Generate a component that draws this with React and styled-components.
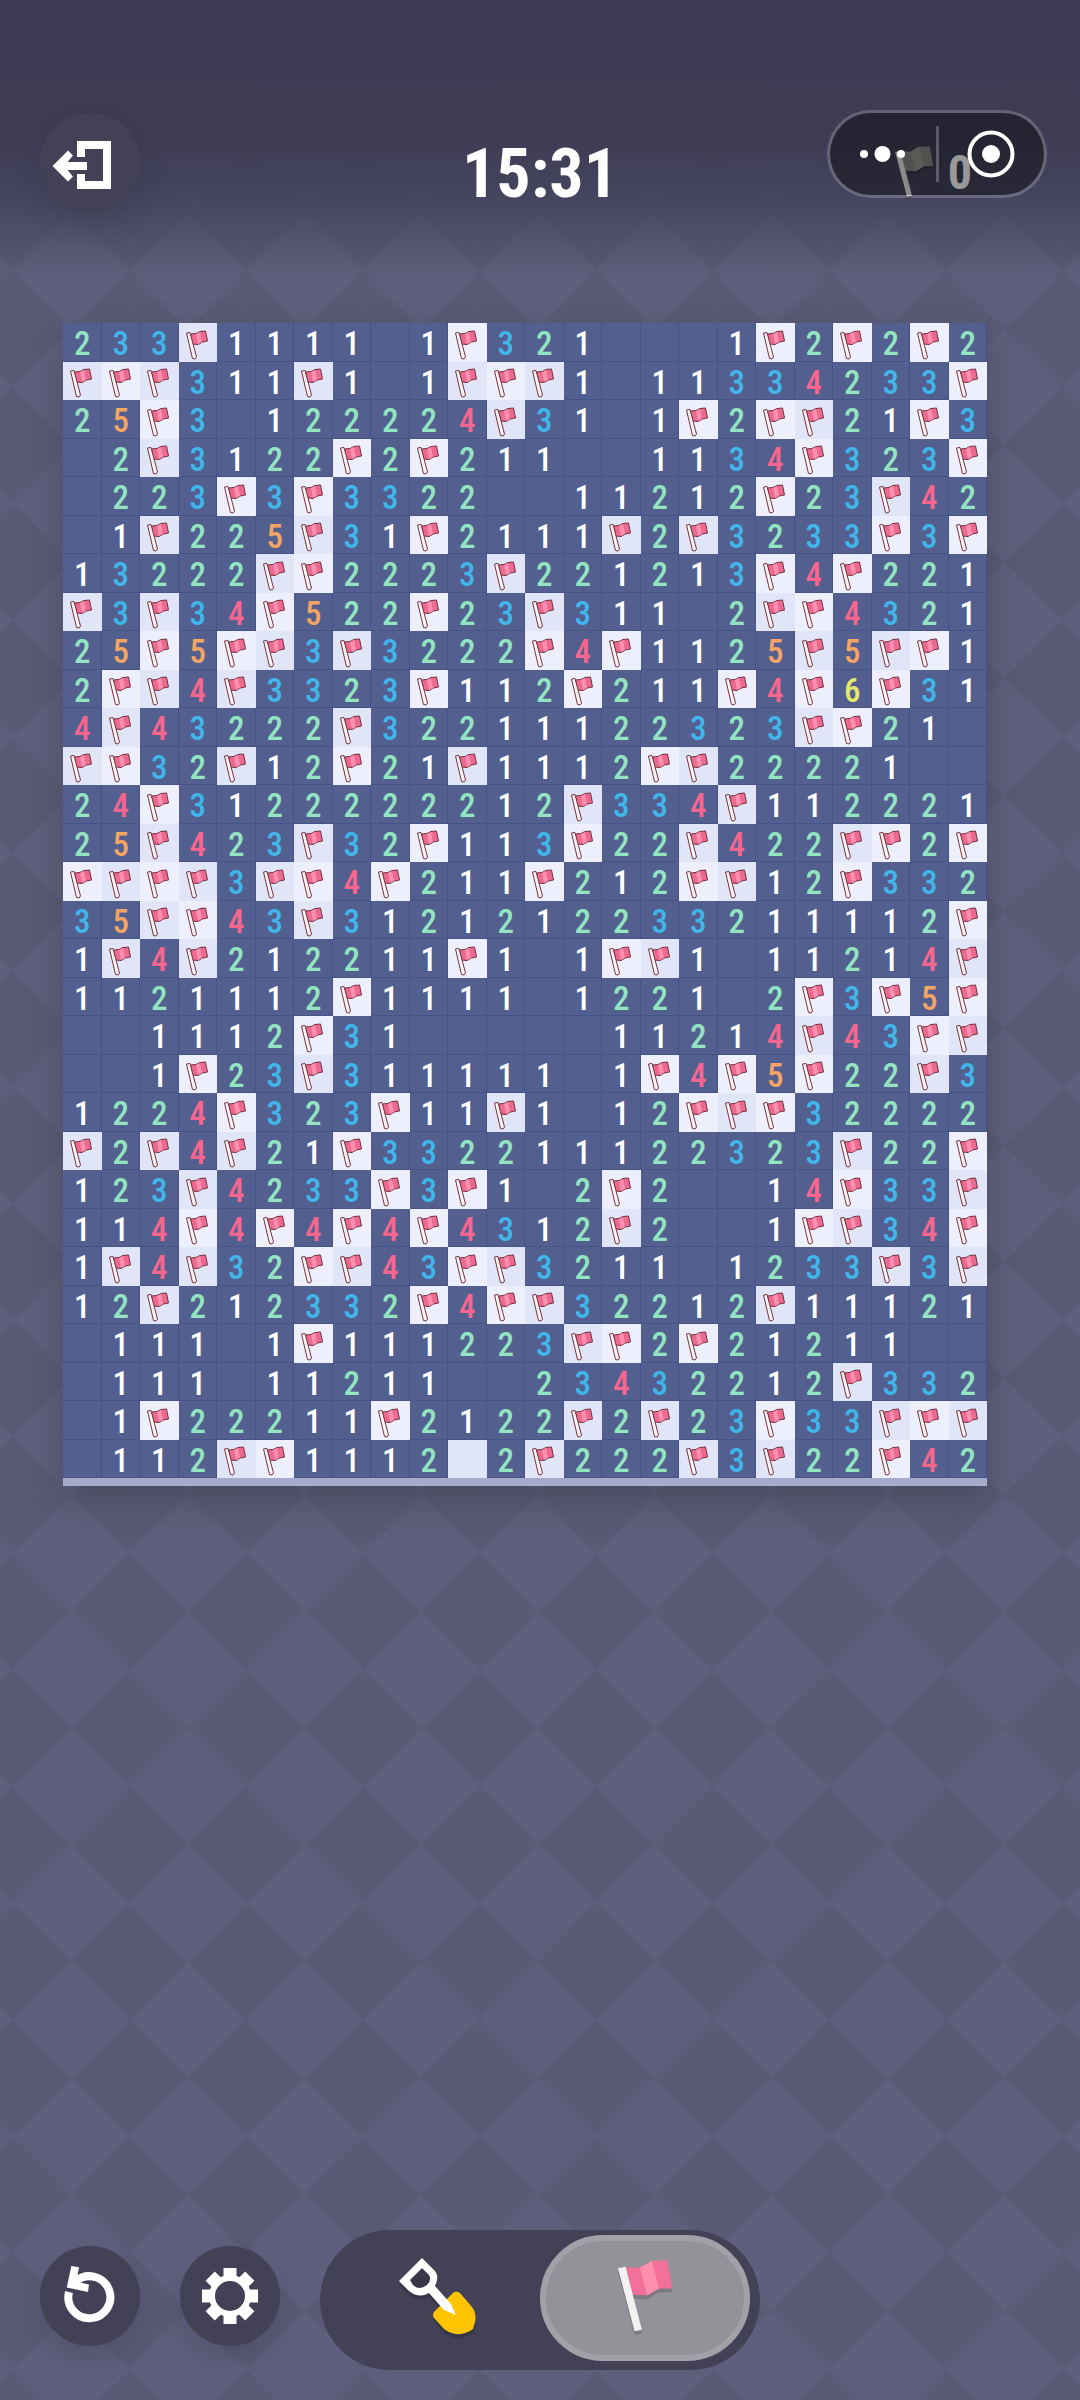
import React from "react";
import styled, { createGlobalStyle } from "styled-components";

const GlobalStyle = createGlobalStyle`
    * {
        box-sizing: border-box;
    }

    body {
        margin: 0;
        background: #5a5974;
        font-family: "Roboto Condensed", Roboto, sans-serif;
    }

    button {
        border: none;
        padding: 0;
        font-family: inherit;
        cursor: pointer;
    }

    svg {
        display: block;
    }
`;

const Page = styled.div`
    position: relative;
    min-height: 100vh;
    display: flex;
    flex-direction: column;
    background-color: #5f5f7d;
    background-image: linear-gradient(#3c3a53 0px, #3e3d54 140px, rgba(64, 63, 88, 0.85) 190px, rgba(90, 89, 116, 0) 280px),
        linear-gradient(45deg, #5a5a76 25%, transparent 25%, transparent 75%, #5a5a76 75%),
        linear-gradient(-45deg, #5a5a76 25%, transparent 25%, transparent 75%, #5a5a76 75%);
    background-size: 100% 100%, 10.8vw 10.8vw, 10.8vw 10.8vw;
    background-position: 0 0, 13px 212px, 13px 212px;
`;

const Header = styled.header`
    display: grid;
    grid-template-columns: 1fr auto 1fr;
    align-items: center;
    padding: 113px 40px 0;
`;

const RoundButton = styled.button`
    width: 100px;
    height: 100px;
    border-radius: 50%;
    background: #424156;
    box-shadow: 0 12px 24px rgba(40, 38, 60, 0.2);
`;

const Timer = styled.div`
    padding-top: 22px;
    color: #ffffff;
    font-size: 68px;
    font-weight: 700;
    line-height: 78px;
`;

const Counter = styled.div`
    justify-self: end;
    display: flex;
    align-items: center;
    gap: 14px;
    padding: 20px 68px 0 0;
    color: #ffffff;
    font-size: 48px;
    font-weight: 700;
    line-height: 56px;
`;

const Capsule = styled.div`
    position: absolute;
    top: 110px;
    right: 33px;
    width: 220px;
    height: 88px;
    display: flex;
    align-items: center;
    border: 3px solid rgba(255, 255, 255, 0.2);
    border-radius: 44px;
    background: rgba(0, 0, 0, 0.4);
    background-clip: padding-box;
`;

const CapsuleButton = styled.button`
    flex: 1;
    height: 56px;
    display: flex;
    align-items: center;
    justify-content: center;
    background: none;

    & + & {
        border-left: 3px solid rgba(255, 255, 255, 0.25);
    }
`;

const Main = styled.main`
    padding: 110px 93px 0 63px;
`;

const Board = styled.div`
    display: grid;
    grid-template-columns: repeat(24, 1fr);
    grid-template-rows: repeat(30, 1fr);
    aspect-ratio: 24 / 30;
    background: #525f8f;
`;

const BoardFrame = styled.div`
    border-bottom: 8px solid #a6abcb;
    box-shadow: 0 16px 32px rgba(50, 46, 58, 0.35);
`;

const numberColors = {
    1: "#ffffff",
    2: "#93e4c0",
    3: "#41b6ea",
    4: "#f7668f",
    5: "#f3a563",
    6: "#e6e96c",
};

const Cell = styled.button`
    min-width: 0;
    min-height: 0;
    display: flex;
    align-items: center;
    justify-content: center;
    padding-top: 4px;
    background: #525f8f;
    box-shadow: inset -1px -1px 0 #46528a;
    color: ${(props) => numberColors[props.$value]};
    font-size: 33px;
    font-weight: 500;
    line-height: 34px;
`;

const CoveredCell = styled.button`
    min-width: 0;
    min-height: 0;
    padding: 5px 0 0 6px;
    background: ${(props) => (props.$light ? "#edeffc" : "#e1e5f8")};
`;

const Footer = styled.footer`
    display: flex;
    align-items: flex-start;
    gap: 40px;
    margin-top: auto;
    padding: 0 40px 30px;
`;

const Actions = styled.div`
    display: flex;
    gap: 40px;
    padding-top: 16px;
`;

const ToolSwitch = styled.div`
    display: flex;
    width: 440px;
    height: 140px;
    padding: 5px 10px 9px;
    border-radius: 70px;
    background: #424156;
`;

const ToolButton = styled.button`
    flex: 1;
    display: flex;
    align-items: center;
    justify-content: center;
    border: 6px solid ${(props) => (props.$active ? "#a2a1a8" : "transparent")};
    border-radius: 63px;
    background: ${(props) => (props.$active ? "#939298" : "transparent")};
`;

// F = flag, # = covered, . = empty
const rows = [
    "233F1111.1F321...1F2F2F2",
    "FFF311F1.1FFF1.11334233F",
    "25F3.122224F31.1F2FF21F3",
    ".2F3122F2F211..1134F323F",
    ".223F3F3322..11212F23F42",
    ".1F225F31F2111F2F3233F3F",
    "13222FF2223F221213F4F221",
    "F3F34F522F23F311.2FF4321",
    "25F5FF3F3222F4F1125F5FF1",
    "2FF4F3323F112F211F4F6F31",
    "4F43222F32211122323FF21.",
    "FF32F12F21F1112FF22221..",
    "24F3122222212F334F112221",
    "25F423F32F113F22F422FF2F",
    "FFFF3FF4F211F212FF12F332",
    "35FF43F3121212233211112F",
    "1F4F212211F1.1FF1.11214F",
    "1121112F1111.1221.2F3F5F",
    "..1112F31.....11214F43FF",
    "..1F23F311111.1F4F5F22F3",
    "1224F323F11F1.12FFF32222",
    "F2F4F21F332211122323F22F",
    "123F4233F3F1.2F2..14F33F",
    "114F4F4F4F4312F2..1FF34F",
    "1F4F32FF43FF3211.1233F3F",
    "12F212332F4FF32212F11121",
    ".111.1F111223FF2F21211..",
    ".111.11211..23432212F332",
    ".1F22211F2122F2F23F33FFF",
    ".112FF1112#2F222F3F22F42",
];

const ExitIcon = () => (
    <svg width="100" height="100" viewBox="0 0 100 100" fill="#fff">
        <path d="M37 28H71V76H37V61H45V68H63V36H45V44H37Z" />
        <path d="M12.5 53L28 37.5L33 42.5L27.5 49H47V57H27.5L33 63.5L28 68.5Z" />
    </svg>
);

const RestartIcon = () => (
    <svg width="100" height="100" viewBox="0 0 100 100">
        <path d="M29 46A21 21 0 1 0 36 35" fill="none" stroke="#fff" strokeWidth="8" />
        <path d="M31.3 20L39 21.3L37 32L41 36.7L49 38.5L48 46L26.8 41.5Z" fill="#fff" />
    </svg>
);

const GearIcon = () => (
    <svg width="100" height="100" viewBox="0 0 100 100">
        <circle cx="50" cy="50" r="18" fill="none" stroke="#fff" strokeWidth="6" />
        {[0, 45, 90, 135, 180, 225, 270, 315].map((angle) => (
            <path key={angle} d="M43.5 22H56.5V34H43.5Z" fill="#fff" transform={`rotate(${angle} 50 50)`} />
        ))}
    </svg>
);

const ShovelIcon = () => (
    <svg width="84" height="84" viewBox="-6 -2 84 84">
        <g fill="#000" opacity="0.15" transform="translate(0 4)">
            <path d="M35 54L54 35Q57 32 61 35L73 49Q77 54 76.500 62L74 71Q66 77 57 76Q50 75 45 71L35 60Q33 57 35 54Z" />
            <path d="M23 0L0 23L10 33Q20 41 30 35L45 52L57 57L52 46L36 28Q41 18 35 12Z" />
        </g>
        <path d="M35 54L54 35Q57 32 61 35L73 49Q77 54 76.500 62L74 71Q66 77 57 76Q50 75 45 71L35 60Q33 57 35 54Z" fill="#ffc400" />
        <path
            d="M23 0L0 23L10 33Q20 41 30 35L45 52L57 57L52 46L36 28Q41 18 35 12ZM23 10L30 17Q33 22 28 27Q20 33 14 27L11 22Z"
            fill="#fff"
            fillRule="evenodd"
        />
    </svg>
);

const FlagIcon = ({ width, height, pole, cloth, fold }) => (
    <svg width={width} height={height} viewBox="414 180 166 240">
        <g fill="#000" opacity="0.15" transform="translate(0 12)">
            <path d="M414 210L437 206L486 396L464 400Z" />
            <path d="M438 207L480 209L516 188L562 186L578 271L538 271L502 292L458 290Z" />
        </g>
        <path d="M438 207L480 209L516 188L562 186L578 271L538 271L502 292L458 290Z" fill={cloth} />
        <path d="M480 209L516 188L538 271L502 292Z" fill={fold} />
        <path d="M414 210L437 206L486 396L464 400Z" fill={pole} />
    </svg>
);

const TileFlag = () => (
    <svg width="24" height="30" viewBox="0 0 24 30" strokeLinejoin="round" stroke="#74303f">
        <path d="M5.500 4L11 3.500L15 1.500L20.500 1L22.500 11L17.500 12L13 14.500L7.500 14Z" fill="#ec6a90" />
        <path d="M11 4L15 2L17 12L13 14Z" fill="#ff8fb0" stroke="none" />
        <path d="M1.500 3L5 2.500L11.500 27L10 29L7.500 28.500Z" fill="#fff4f4" />
    </svg>
);

const App = () => {
    return (
        <>
            <GlobalStyle />
            <Page>
                <Header>
                    <RoundButton aria-label="Exit">
                        <ExitIcon />
                    </RoundButton>
                    <Timer>{"15:31"}</Timer>
                    <Counter>
                        <FlagIcon width={39} height={56} pole="#e6e6e6" cloth="#878784" fold="#959590" />
                        <span>{"0"}</span>
                    </Counter>
                    <Capsule>
                        <CapsuleButton aria-label="More">
                            <svg width="48" height="20" viewBox="0 0 48 20" fill="#fff">
                                <circle cx="5" cy="10" r="4" />
                                <circle cx="23.500" cy="10" r="8" />
                                <circle cx="42" cy="10" r="4" />
                            </svg>
                        </CapsuleButton>
                        <CapsuleButton aria-label="Close">
                            <svg width="50" height="50" viewBox="0 0 50 50">
                                <circle cx="25" cy="25" r="21.500" fill="none" stroke="#fff" strokeWidth="4" />
                                <circle cx="25" cy="25" r="9" fill="#fff" />
                            </svg>
                        </CapsuleButton>
                    </Capsule>
                </Header>
                <Main>
                    <BoardFrame>
                        <Board>
                            {rows.map((row, y) =>
                                row.split("").map((value, x) => {
                                    const key = `${x}-${y}`;
                                    if (value === "F" || value === "#") {
                                        return (
                                            <CoveredCell key={key} $light={(x + y) % 2 === 0} aria-label={value === "F" ? "Flag" : "Covered"}>
                                                {value === "F" && <TileFlag />}
                                            </CoveredCell>
                                        );
                                    }
                                    return (
                                        <Cell key={key} $value={value}>
                                            {value === "." ? "" : value}
                                        </Cell>
                                    );
                                })
                            )}
                        </Board>
                    </BoardFrame>
                </Main>
                <Footer>
                    <Actions>
                        <RoundButton aria-label="Restart">
                            <RestartIcon />
                        </RoundButton>
                        <RoundButton aria-label="Settings">
                            <GearIcon />
                        </RoundButton>
                    </Actions>
                    <ToolSwitch>
                        <ToolButton aria-label="Dig">
                            <ShovelIcon />
                        </ToolButton>
                        <ToolButton $active aria-label="Place flag" aria-pressed="true">
                            <FlagIcon width={55} height={80} pole="#f3f2f3" cloth="#f2709a" fold="#ff8fae" />
                        </ToolButton>
                    </ToolSwitch>
                </Footer>
            </Page>
        </>
    );
};

export default App;
